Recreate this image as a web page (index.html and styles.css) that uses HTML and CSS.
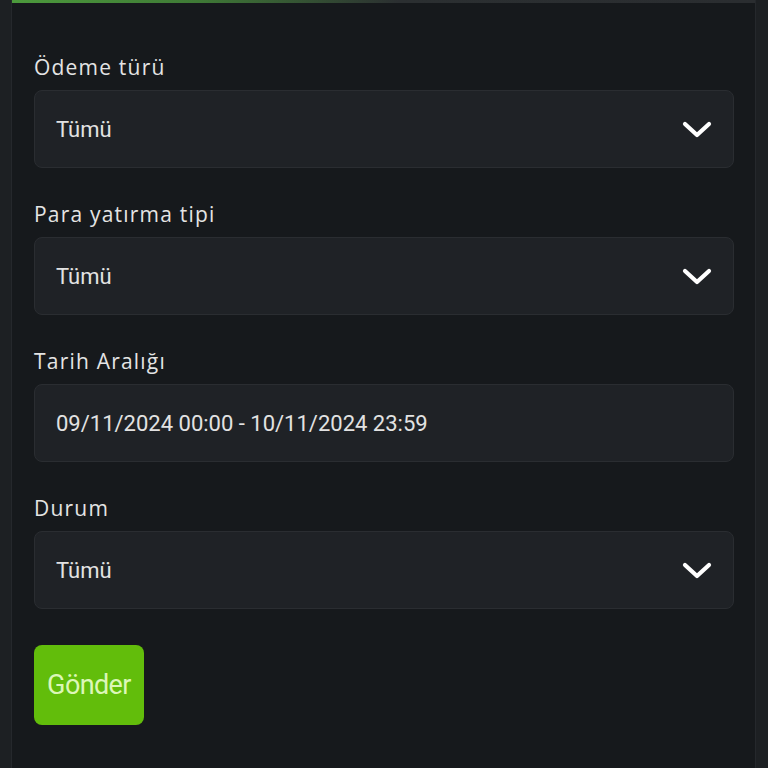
FILE: index.html
```html
<!DOCTYPE html>
<html lang="tr">
<head>
<meta charset="utf-8">
<link rel="stylesheet" href="styles.css">
</head>
<body>
<div class="page">
  <div class="panel">
    <div class="topbar"></div>
    <form class="form">
      <div class="group">
        <div class="label">Ödeme türü</div>
        <div class="field select"><span class="value">Tümü</span>
          <svg class="chev" width="30" height="18" viewBox="0 0 30 18"><path d="M3 3 L15 14 L27 3" fill="none" stroke="#fff" stroke-width="4.2" stroke-linecap="round" stroke-linejoin="round"/></svg>
        </div>
      </div>
      <div class="group">
        <div class="label">Para yatırma tipi</div>
        <div class="field select"><span class="value">Tümü</span>
          <svg class="chev" width="30" height="18" viewBox="0 0 30 18"><path d="M3 3 L15 14 L27 3" fill="none" stroke="#fff" stroke-width="4.2" stroke-linecap="round" stroke-linejoin="round"/></svg>
        </div>
      </div>
      <div class="group">
        <div class="label">Tarih Aralığı</div>
        <div class="field"><span class="value">09/11/2024 00:00 - 10/11/2024 23:59</span></div>
      </div>
      <div class="group">
        <div class="label">Durum</div>
        <div class="field select"><span class="value">Tümü</span>
          <svg class="chev" width="30" height="18" viewBox="0 0 30 18"><path d="M3 3 L15 14 L27 3" fill="none" stroke="#fff" stroke-width="4.2" stroke-linecap="round" stroke-linejoin="round"/></svg>
        </div>
      </div>
      <div class="actions"><button type="button" class="btn">Gönder</button></div>
    </form>
  </div>
</div>
</body>
</html>
```
FILE: styles.css
```css
* { box-sizing: border-box; }
html, body { margin: 0; padding: 0; }
body {
  background: #1d2023;
  width: 768px;
  height: 768px;
  overflow: hidden;
  font-family: "Open Sans", "Liberation Sans", sans-serif;
}
.page {
  padding-left: 11px;
  padding-right: 12px;
  height: 768px;
}
.panel {
  background: #16191c;
  border-left: 1px solid #25282c;
  border-right: 1px solid #25282c;
  height: 100%;
}
.topbar {
  height: 3px;
  background: linear-gradient(90deg, #4c9a3c 0%, #3f7a36 25%, #2b2f31 52%, #2a2d30 100%);
}
.form {
  padding: 50px 21px 0 22px;
  display: flex;
  flex-direction: column;
  gap: 32px;
}
.group {
  display: flex;
  flex-direction: column;
  gap: 9px;
}
.label {
  height: 28px;
  line-height: 28px;
  font-size: 21px;
  letter-spacing: 1.2px;
  color: #e4e4e4;
}
.field {
  height: 78px;
  background: #1f2226;
  border: 1px solid #2a2d31;
  border-radius: 8px;
  display: flex;
  align-items: center;
  justify-content: space-between;
  padding: 0 21px 0 21px;
}
.value {
  font-family: Roboto, "Liberation Sans", sans-serif;
  font-size: 22px;
  color: #e2e2e2;
}
.chev { display: block; margin-top: 1px; }
.actions { margin-top: 4px; }
.btn {
  width: 110px;
  height: 80px;
  background: #62bd0b;
  border: none;
  border-radius: 8px;
  color: #dcf7b8;
  font-family: Roboto, "Liberation Sans", sans-serif;
  font-size: 27px;
  letter-spacing: -0.6px;
  padding: 0;
}
```
